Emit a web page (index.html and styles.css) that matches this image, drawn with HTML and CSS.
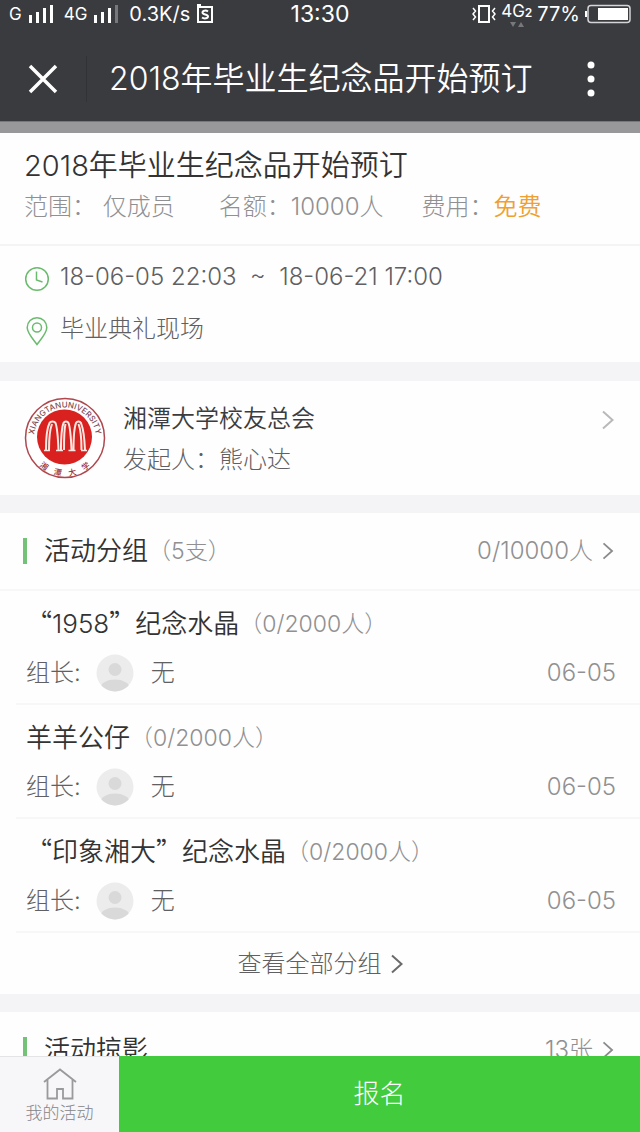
FILE: index.html
```html
<!DOCTYPE html>
<html lang="zh-CN">
<head>
<meta charset="utf-8">
<meta name="viewport" content="width=device-width, initial-scale=1">
<title>2018年毕业生纪念品开始预订</title>
<link rel="stylesheet" href="styles.css">
</head>
<body>
<svg class="defs" width="0" height="0" aria-hidden="true">
  <symbol id="chevron" viewBox="0 0 12 20"><path d="M1 1.500 10.500 10 1 18.500" fill="none" stroke="currentColor" stroke-width="2"/></symbol>
  <symbol id="avatar" viewBox="0 0 38 38">
    <clipPath id="round"><circle cx="19" cy="19" r="18.500"/></clipPath>
    <g clip-path="url(#round)"><rect width="38" height="38" fill="#ececec"/><circle cx="19" cy="15.500" r="6.500" fill="#d9d9d9"/><ellipse cx="19" cy="34" rx="14.500" ry="8.500" fill="#d9d9d9"/></g>
  </symbol>
</svg>

<header class="top">
  <div class="status">
    <div class="status-left">
      <span class="carrier">G</span>
      <svg class="bars" width="26" height="20" viewBox="0 0 26 20" fill="#fff"><path d="M1 11h3v8H1zM8 8h3v11H8zM15 4h3v15h-3zM22 1h3v18h-3z"/></svg>
      <span class="carrier">4G</span>
      <svg class="bars" width="26" height="20" viewBox="0 0 26 20" fill="#fff"><path d="M1 11h3v8H1zM8 8h3v11H8zM15 4h3v15h-3z"/><path d="M22 1h3v18h-3z" fill="#77787c"/></svg>
      <span class="speed">0.3K/s</span>
      <svg width="18" height="20" viewBox="0 0 18 20" fill="none" stroke="#fff" stroke-width="2"><path d="M2 3h14v15H2zM1 1h4"/><path d="M12 7.500C10 6 6.500 6.500 6.500 8.500c0 2.500 5.500 1.500 5.500 4 0 2-4 2.500-6 1"/></svg>
    </div>
    <span class="clock">13:30</span>
    <div class="status-right">
      <svg width="24" height="20" viewBox="0 0 24 20" fill="none" stroke="#fff" stroke-width="2"><path d="M7 2h10v16H7z"/><path d="m1 4 2.500 3L1 10l2.500 3L1 16M23 4l-2.500 3 2.500 3-2.500 3 2.500 3" stroke-width="1.500"/></svg>
      <span class="network"><span>4G<b>2</b></span>
        <svg width="14" height="5" viewBox="0 0 14 5" fill="#77787c"><path d="M0 0h6L3 5zM8 5h6l-3-5z"/></svg>
      </span>
      <span class="speed">77%</span>
      <svg width="46" height="20" viewBox="0 0 46 20"><path d="M0 7h2v6H0z" fill="#fff"/><rect x="3" y="1.500" width="42" height="17" rx="3" fill="none" stroke="#d5d5d7" stroke-width="1.500"/><path d="M13 4h30v12H13z" fill="#fff"/></svg>
    </div>
  </div>
  <nav class="navbar">
    <button class="close" type="button" aria-label="关闭"><svg width="30" height="30" viewBox="0 0 30 30"><path d="M2 2 28 28M28 2 2 28" stroke="#fff" stroke-width="3.500"/></svg></button>
    <h1 class="nav-title">2018年毕业生纪念品开始预订</h1>
    <button class="more" type="button" aria-label="更多"><svg width="8" height="36" viewBox="0 0 8 36" fill="#fff"><circle cx="4" cy="4" r="3.500"/><circle cx="4" cy="18" r="3.500"/><circle cx="4" cy="32" r="3.500"/></svg></button>
  </nav>
</header>

<main class="content">
  <div class="cover"></div>
  <section class="summary">
    <h2 class="title">2018年毕业生纪念品开始预订</h2>
    <div class="meta"><span>范围： 仅成员</span><span>名额：10000人</span><span>费用：<em>免费</em></span></div>
  </section>
  <section class="details">
    <p class="detail"><svg width="26" height="26" viewBox="0 0 26 26" fill="none" stroke="#6bbb6e" stroke-width="1.500"><circle cx="13" cy="13" r="11.300"/><path d="M12.500 5.500V14l6 2"/></svg><span>18-06-05 22:03&nbsp; ~ &nbsp;18-06-21 17:00</span></p>
    <p class="detail"><svg width="26" height="30" viewBox="0 0 26 30" fill="none" stroke="#6bbb6e" stroke-width="1.500"><path d="M13 28.500C10 24 3.200 17.500 3.200 11.500a9.800 9.800 0 0 1 19.600 0c0 6-6.800 12.500-9.800 17z"/><circle cx="13" cy="11.500" r="4.500"/></svg><span>毕业典礼现场</span></p>
  </section>

  <a class="organizer" href="#organizer">
    <svg class="logo" width="82" height="82" viewBox="0 0 82 82" role="img" aria-label="湘潭大学">
      <defs><path id="arc-top" d="M10.500 47A31 31 0 1 1 71.500 47"/><path id="arc-bottom" d="M5 52A37.500 37.500 0 0 0 77 52"/></defs>
      <circle cx="41" cy="41" r="39.500" fill="#fff" stroke="#b0474e" stroke-width="1.500"/>
      <circle cx="40.500" cy="40" r="27.500" fill="#d9221f"/>
      <g fill="none" stroke="#fbe7e2">
        <path d="M20 53.500h6M32 53.500h7M44.500 53.500h7M57 53.500h6" stroke-width="1.500"/>
        <path d="M22 53c0-12 1-22 3.500-27 1-2 5-2 6 0 2 5 2.500 15 3 27M25 53c0-12 1-21 3-26M37 53c0-12 .5-22 2.500-27 1-2 4-2 5 0 2 5 2.500 15 3 27M40 53c0-12 .2-21 1.500-26M49.500 53c0-12 .5-22 2.500-27 1-2 4-2 5 0 2 5 3.500 15 4 27M57.500 53c0-12-1-21-3-26" stroke-width="2"/>
      </g>
      <text class="logo-latin"><textPath href="#arc-top" startOffset="50%" text-anchor="middle">XIANGTANUNIVERSITY</textPath></text>
      <text class="logo-han"><textPath href="#arc-bottom" startOffset="50%" text-anchor="middle">湘　潭　大　学</textPath></text>
    </svg>
    <span class="org-text"><strong>湘潭大学校友总会</strong><span>发起人：熊心达</span></span>
    <svg class="chevron pale" width="12" height="20"><use href="#chevron"/></svg>
  </a>

  <section class="card">
    <a class="card-head" href="#groups"><h3>活动分组</h3><span class="note">（5支）</span><span class="count">0/10000人</span><svg class="chevron" width="12" height="18"><use href="#chevron"/></svg></a>
    <ul class="groups">
      <li><a class="group" href="#group-1">
        <span class="group-name"><b><q>“</q>1958<q>”</q>纪念水晶</b><span class="note">（0/2000人）</span></span>
        <span class="leader"><span>组长:</span><svg width="38" height="38"><use href="#avatar"/></svg><span>无</span><time>06-05</time></span>
      </a></li>
      <li><a class="group" href="#group-2">
        <span class="group-name"><b>羊羊公仔</b><span class="note">（0/2000人）</span></span>
        <span class="leader"><span>组长:</span><svg width="38" height="38"><use href="#avatar"/></svg><span>无</span><time>06-05</time></span>
      </a></li>
      <li><a class="group" href="#group-3">
        <span class="group-name"><b><q>“</q>印象湘大<q>”</q>纪念水晶</b><span class="note">（0/2000人）</span></span>
        <span class="leader"><span>组长:</span><svg width="38" height="38"><use href="#avatar"/></svg><span>无</span><time>06-05</time></span>
      </a></li>
    </ul>
    <a class="all" href="#all-groups">查看全部分组<svg class="chevron" width="12" height="20"><use href="#chevron"/></svg></a>
  </section>

  <section class="card">
    <a class="card-head" href="#photos"><h3>活动掠影</h3><span class="count">13张</span><svg class="chevron" width="12" height="18"><use href="#chevron"/></svg></a>
  </section>
</main>

<footer class="bottom">
  <a class="mine" href="#mine"><svg width="34" height="32" viewBox="0 0 34 32" fill="none" stroke="#999a9c" stroke-width="1.800"><path d="M1 14 17 1.500 33 14M4.500 11.500V30.500h9.500V21h6v9.500h9.500V11.500"/></svg>我的活动</a>
  <button class="signup" type="button">报名</button>
</footer>
</body>
</html>
```
FILE: styles.css
```css
* { box-sizing: border-box; }

body {
  margin: 0;
  height: 100vh;
  display: flex;
  flex-direction: column;
  background: #f4f3f5;
  color: #606062;
  font-family: Inter, "Noto Sans CJK SC", sans-serif;
  font-size: 24px;
  font-weight: 300;
  line-height: 36px;
}

h1, h2, h3, p, ul { margin: 0; padding: 0; font-weight: inherit; }
ul { list-style: none; }
a { color: inherit; text-decoration: none; }
button { border: 0; padding: 0; background: none; color: inherit; font: inherit; }
svg { flex: none; display: block; }
em { font-style: normal; font-weight: 350; color: #f0a031; }
.defs { position: absolute; }

/* Top bars */
.top { flex: none; background: #3a3b3f; color: #fff; }

.status {
  display: grid;
  grid-template-columns: 1fr auto 1fr;
  align-items: center;
  height: 28px;
  padding: 0 9px;
  line-height: 28px;
  font-weight: 400;
}
.status-left, .status-right { display: flex; align-items: center; }
.status-right { justify-content: flex-end; gap: 5px; }
.carrier { font-size: 17px; }
.bars { margin: 0 10px 0 6px; }
.speed { font-size: 20px; }
.status-left .speed { margin-right: 6px; }
.clock { font-size: 23px; }
.network {
  display: flex;
  flex-direction: column;
  align-items: center;
  font-size: 17px;
  line-height: 19px;
}
.network b { font-size: 12px; font-weight: 600; }

.navbar { display: flex; align-items: center; height: 93px; padding-top: 9px; }
.close {
  display: flex;
  align-items: center;
  height: 46px;
  padding: 0 28px;
  border-right: 1px solid #323337;
}
.nav-title {
  flex: 1;
  padding-left: 22px;
  font-size: 32px;
  font-weight: 350;
  line-height: 48px;
  white-space: nowrap;
}
.more { padding: 0 45px 0 20px; }

/* Event information */
.content { flex: 1; min-height: 0; overflow: hidden; }
.cover { height: 12px; background: #98989b; border-top: 1px solid #77787b; }

.summary { padding: 12px 24px 18px; background: #fefefe; border-bottom: 2px solid #f4f4f4; }
.title { font-size: 29px; font-weight: 350; line-height: 42px; color: #333; }
.meta { display: flex; gap: 38px; line-height: 38px; margin-top: 1px; color: #909092; white-space: nowrap; }
.meta span:first-child { padding-right: 6px; }

.details { padding: 13px 24px 15px; background: #fefefe; }
.detail { display: flex; align-items: center; gap: 10px; height: 36px; }
.detail svg { margin-top: 4px; }
.detail + .detail { margin-top: 16px; }

.organizer {
  display: flex;
  align-items: center;
  margin-top: 19px;
  padding: 16px 26px 16px 24px;
  background: #fefefe;
}
.org-text { flex: 1; display: flex; flex-direction: column; gap: 5px; padding: 2px 0 0 17px; }
.org-text strong { font-weight: 350; color: #3c3c3e; }
.logo-latin { font-size: 8px; font-weight: 500; fill: #7d4a52; }
.logo-han { font-size: 8px; font-weight: 500; fill: #9b2f35; }
.chevron { color: #8b8b8d; }
.chevron.pale { color: #b9b9bb; margin-bottom: 36px; }

/* Group list */
.card { margin-top: 18px; background: #fefefe; }
.card-head { display: flex; align-items: center; height: 78px; padding: 0 26px 0 23px; border-bottom: 2px solid #f7f7f7; color: #909092; }
.card-head h3 {
  display: flex;
  align-items: center;
  gap: 17px;
  color: #333;
  font-size: 26px;
  font-weight: 350;
}
.card-head h3::before { content: ""; width: 4px; height: 26px; background: #74c278; }
.count { margin-left: auto; padding-right: 9px; }
.note { font-size: 23px; color: #909092; }

.group { display: block; margin-left: 16px; padding: 14px 24px 9px 10px; border-bottom: 2px solid #f7f7f7; }
.group-name { display: flex; align-items: center; height: 38px; line-height: 38px; }
.group-name b { height: 38px; font-size: 26px; font-weight: 350; color: #333; }
q { quotes: none; font-family: "Noto Sans CJK SC", sans-serif; line-height: 1px; }
q::before, q::after { content: none; }
.leader { display: flex; align-items: center; height: 51px; padding-top: 9px; }
.leader svg { margin: 0 17px 0 15px; }
.leader time { margin-left: auto; color: #909092; }

.all { display: flex; align-items: center; justify-content: center; gap: 9px; height: 61px; }
.all .chevron { color: #6b6b6d; }

/* Bottom actions */
.bottom { flex: none; display: flex; height: 76px; }
.mine {
  flex: 0 0 119px;
  display: flex;
  flex-direction: column;
  align-items: center;
  gap: 1px;
  padding-top: 11px;
  background: #f7f6f9;
  border-top: 1px solid #e4e4e6;
  color: #858588;
  font-size: 17px;
  line-height: 24px;
}
.signup { flex: 1; background: #41cb3d; color: #fff; font-size: 26px; }
```
